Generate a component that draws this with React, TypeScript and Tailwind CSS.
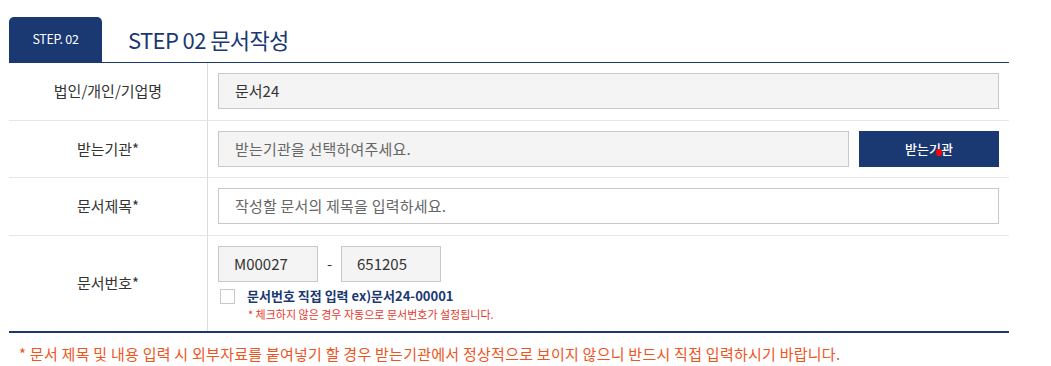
import React from "react"

const font = { fontFamily: '"Noto Sans CJK KR", "Noto Sans", sans-serif' }

function Row({ label, children, tall }: { label: string; children: React.ReactNode; tall?: boolean }) {
  return (
    <div className={`flex border-b border-[#e6e6e6] last:border-b-0 ${tall ? "h-[95px]" : "h-[57.5px]"}`}>
      <div className="w-[199px] shrink-0 flex items-center justify-center border-r border-[#dcdcdc] text-[15px] text-[#333]">
        {label}
      </div>
      <div className="flex-1 pl-[10px] pr-[10px] flex items-center">{children}</div>
    </div>
  )
}

export default function App() {
  return (
    <div className="w-[1051px] h-[366px] bg-white pt-[17px]" style={font}>
      <div className="ml-[9px] w-[1000px]">
        {/* Header */}
        <div className="flex items-end h-[46px] border-b border-[#1a3872]">
          <div className="w-[93px] h-[45px] bg-[#1a3872] rounded-t-[5px] flex items-center justify-center text-white text-[12.5px] tracking-[-0.3px]">
            STEP. 02
          </div>
          <div className="ml-[26px] h-[45px] flex items-center text-[22px] text-[#1a3872] tracking-[-0.6px]">
            STEP 02 문서작성
          </div>
        </div>

        {/* Table */}
        <div className="border-b-2 border-[#1a3872]">
          <Row label="법인/개인/기업명">
            <div className="w-full h-[36px] bg-[#f4f4f4] border border-[#c8c8c8] flex items-center px-[16px] text-[15px] text-[#333]">
              문서24
            </div>
          </Row>
          <Row label="받는기관*">
            <div className="flex-1 h-[36px] bg-[#f4f4f4] border border-[#c8c8c8] flex items-center px-[16px] text-[15px] text-[#666] tracking-[0.2px]">
              받는기관을 선택하여주세요.
            </div>
            <button className="relative ml-[10px] w-[140px] h-[36px] bg-[#1a3872] text-white text-[13px] font-medium">
              받는기관
              <span className="absolute left-[77px] top-[18px] w-[6px] h-[7px] rounded-full bg-[#ff0000]" />
            </button>
          </Row>
          <Row label="문서제목*">
            <div className="w-full h-[36px] bg-white border border-[#c8c8c8] flex items-center px-[16px] text-[15px] text-[#666] tracking-[0.2px]">
              작성할 문서의 제목을 입력하세요.
            </div>
          </Row>
          <Row label="문서번호*" tall>
            <div className="flex flex-col pt-[1px]">
              <div className="flex items-center">
                <div className="w-[100px] h-[36px] bg-[#f4f4f4] border border-[#c8c8c8] flex items-center px-[15px] text-[15px] text-[#333]">
                  M00027
                </div>
                <span className="w-[23px] text-center text-[15px] text-[#333]">-</span>
                <div className="w-[100px] h-[36px] bg-[#f4f4f4] border border-[#c8c8c8] flex items-center px-[15px] text-[15px] text-[#333]">
                  651205
                </div>
              </div>
              <div className="flex items-center mt-[6px] ml-[2px]">
                <span className="w-[15px] h-[15px] border border-[#c8c8c8] bg-white" />
                <span className="ml-[12px] text-[13px] font-bold text-[#1a3872] leading-[16px]">
                  문서번호 직접 입력 ex)문서24-00001
                </span>
              </div>
              <div className="ml-[30px] mt-[3px] text-[11px] text-[#e8372c] leading-[14px]">
                * 체크하지 않은 경우 자동으로 문서번호가 설정됩니다.
              </div>
            </div>
          </Row>
        </div>

        <div className="mt-[10px] ml-[10px] text-[15px] text-[#f0541e] tracking-[0.25px]">
          * 문서 제목 및 내용 입력 시 외부자료를 붙여넣기 할 경우 받는기관에서 정상적으로 보이지 않으니 반드시 직접 입력하시기 바랍니다.
        </div>
      </div>
    </div>
  )
}
